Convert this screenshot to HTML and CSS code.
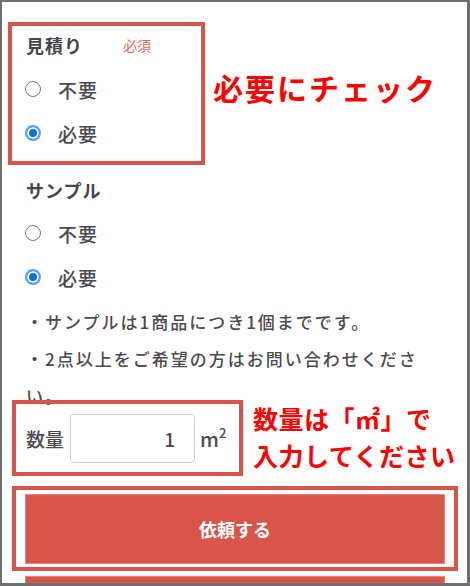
FILE: index.html
```html
<!DOCTYPE html>
<html lang="ja">
<head>
<meta charset="utf-8">
<link rel="stylesheet" href="styles.css">
</head>
<body>
<div class="frame">
  <div class="row-top">
    <div class="anno-box box-est">
      <div class="head"><span class="title">見積り</span><span class="req">必須</span></div>
      <label class="opt"><input type="radio" name="est"><span>不要</span></label>
      <label class="opt"><input type="radio" name="est" checked><span>必要</span></label>
    </div>
    <p class="note-big">必要にチェック</p>
  </div>
  <div class="sample">
    <div class="head"><span class="title">サンプル</span></div>
    <label class="opt"><input type="radio" name="smp"><span>不要</span></label>
    <label class="opt"><input type="radio" name="smp" checked><span>必要</span></label>
    <p class="notes first">・サンプルは1商品につき1個までです。</p>
    <p class="notes">・2点以上をご希望の方はお問い合わせください。</p>
  </div>
  <div class="qty-row">
    <div class="anno-box box-qty">
      <span class="qty-label">数量</span>
      <input class="qty-input" type="text" value="1">
      <span class="unit">m<sup>2</sup></span>
    </div>
    <p class="note-mid">数量は「㎡」で<br>入力してください</p>
  </div>
  <div class="anno-box box-btn"><button class="btn" type="button">依頼する</button></div>
  <button class="btn btn-next" type="button"></button>
</div>
</body>
</html>
```
FILE: styles.css
```css
html, body {
  margin: 0;
  padding: 0;
  background: #fff;
}
body {
  font-family: "Noto Sans CJK JP", "Noto Sans", sans-serif;
  color: #4a4a52;
}
.frame {
  box-sizing: border-box;
  width: 470px;
  height: 586px;
  border-style: solid;
  border-color: #6f6f6f;
  border-width: 2px 3px 3px 2px;
  overflow: hidden;
  padding-top: 20px;
}
.anno-box {
  box-sizing: border-box;
  border: 4px solid #d8544a;
}
.row-top {
  display: flex;
  align-items: flex-start;
}
.box-est {
  width: 197px;
  margin-left: 6px;
  padding: 7px 0 6px 14px;
}
.head {
  display: flex;
  align-items: center;
  height: 24px;
}
.title {
  font-size: 18px;
  font-weight: bold;
  letter-spacing: 1px;
  color: #45454d;
  line-height: 24px;
}
.req {
  font-size: 14px;
  color: #e2625a;
  margin-left: 40px;
  line-height: 24px;
}
.opt {
  display: flex;
  align-items: center;
  height: 44px;
  gap: 17px;
  font-size: 19px;
  font-weight: 500;
  letter-spacing: 1px;
  color: #4a4a52;
}
.box-est .head {
  margin-bottom: 10px;
}
.opt input {
  -webkit-appearance: none;
  appearance: none;
  margin: 0 0 0 -1px;
  width: 16px;
  height: 16px;
  box-sizing: border-box;
  border-radius: 50%;
  border: 1px solid #7a7a7a;
  background: #fff;
  flex: none;
}
.opt input:checked {
  border: 2px solid #5d9dff;
  background: #0a6bff;
  box-shadow: inset 0 0 0 2px #fff;
}
.note-big {
  margin: 47px 0 0 8px;
  font-size: 30px;
  line-height: 36px;
  font-weight: bold;
  letter-spacing: 2px;
  color: #ff0000;
  white-space: nowrap;
}
.sample {
  padding-left: 24px;
  margin-top: 13px;
}
.sample .head {
  margin-bottom: 9px;
}
.notes {
  margin: 0;
  width: 422px;
  font-size: 17px;
  font-weight: 500;
  letter-spacing: 2px;
  line-height: 37px;
  color: #4a4a52;
}
.notes.first {
  margin-top: 4px;
}
.qty-row {
  display: flex;
  align-items: flex-start;
  margin-top: -14px;
}
.box-qty {
  position: relative;
  width: 231px;
  height: 76px;
  margin-left: 10px;
  padding: 10px 0 9px 10px;
  display: flex;
  align-items: center;
}
.qty-label {
  font-size: 19px;
  font-weight: 500;
  color: #4a4a52;
}
.qty-input {
  box-sizing: border-box;
  width: 125px;
  height: 49px;
  margin-left: 6px;
  border: 1px solid #cfcfcf;
  border-radius: 4px;
  padding: 0 19px 0 8px;
  text-align: right;
  font-family: "Noto Sans CJK JP", "Noto Sans", sans-serif;
  font-size: 19px;
  font-weight: 500;
  color: #4a4a52;
  outline: none;
}
.unit {
  margin-left: 5px;
  font-size: 20px;
  font-weight: 500;
  color: #4a4a52;
}
.unit sup {
  font-size: 13px;
  vertical-align: 9px;
  line-height: 0;
}
.note-mid {
  margin: 0 0 0 10px;
  font-size: 25px;
  line-height: 37px;
  font-weight: bold;
  letter-spacing: 0.5px;
  color: #ff0000;
  white-space: nowrap;
}
.box-btn {
  width: 446px;
  margin: 10px 0 0 10px;
  padding: 4px 9px 3px;
}
.btn {
  display: block;
  box-sizing: border-box;
  width: 420px;
  height: 70px;
  margin: 0;
  border: 1px solid #e4847c;
  background: #d9554a;
  color: #fff;
  font-family: "Noto Sans CJK JP", "Noto Sans", sans-serif;
  font-size: 18px;
  font-weight: bold;
  letter-spacing: 0;
  padding: 0;
}
.btn-next {
  margin: 5px 0 0 23px;
}
```
